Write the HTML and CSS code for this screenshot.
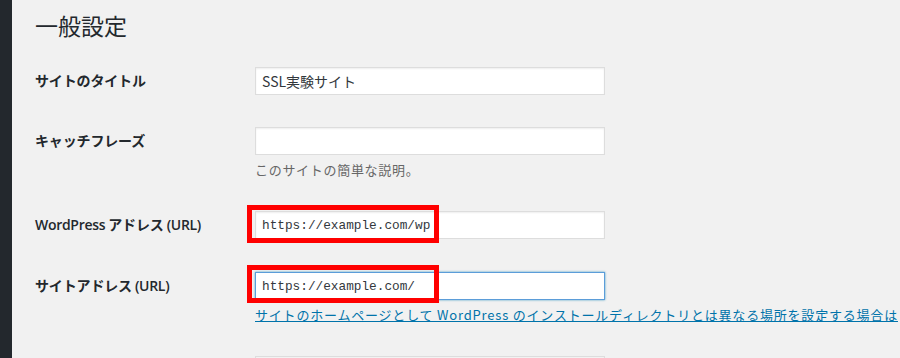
FILE: index.html
```html
<!DOCTYPE html>
<html lang="ja">
<head>
<meta charset="utf-8">
<title>一般設定</title>
<link rel="stylesheet" href="styles.css">
</head>
<body>
<div class="layout">
  <aside class="sidebar"></aside>
  <main class="wrap">
    <h1 class="page-title">一般設定</h1>
    <div class="form-table">
      <div class="row">
        <div class="th">サイトのタイトル</div>
        <div class="td"><input class="regular-text" type="text" value="SSL実験サイト"></div>
      </div>
      <div class="row">
        <div class="th">キャッチフレーズ</div>
        <div class="td">
          <input class="regular-text" type="text" value="">
          <p class="description">このサイトの簡単な説明。</p>
        </div>
      </div>
      <div class="row row-loose">
        <div class="th"><span class="latin">WordPress</span> アドレス <span class="latin">(URL)</span></div>
        <div class="td">
          <span class="field-wrap">
            <input class="regular-text code" type="text" value="https://example.com/wp">
            <span class="highlight hl-1"></span>
          </span>
        </div>
      </div>
      <div class="row">
        <div class="th">サイトアドレス <span class="latin">(URL)</span></div>
        <div class="td">
          <span class="field-wrap">
            <input class="regular-text code is-focused" type="text" value="https://example.com/">
            <span class="highlight hl-2"></span>
          </span>
          <p class="description link-line"><a class="help-link" href="#">サイトのホームページとして WordPress のインストールディレクトリとは異なる場所を設定する場合は</a></p>
        </div>
      </div>
      <div class="row">
        <div class="th"></div>
        <div class="td"><input class="regular-text" type="text" value=""></div>
      </div>
    </div>
  </main>
</div>
</body>
</html>
```

FILE: styles.css
```css
html, body {
  margin: 0;
  padding: 0;
  height: 100%;
  overflow: hidden;
}

body {
  background: #f1f1f1;
  color: #444;
  font-family: "Noto Sans CJK JP", "Noto Sans", sans-serif;
  font-size: 13px;
}

.layout {
  display: flex;
  min-height: 100%;
}

.sidebar {
  flex: 0 0 12px;
  background: #23282d;
}

.wrap {
  flex: 1;
  padding-left: 23px;
  overflow: hidden;
  white-space: nowrap;
}

.page-title {
  margin: 0 0 11px;
  padding-top: 10px;
  font-size: 23px;
  font-weight: 400;
  line-height: 30px;
  color: #23282d;
}

.row {
  display: grid;
  grid-template-columns: 220px 1fr;
}

.th {
  padding: 20px 0;
  font-size: 14px;
  font-weight: 600;
  line-height: 1.3;
  color: #23282d;
  letter-spacing: -0.15px;
}

.latin {
  font-family: "Open Sans", "Noto Sans CJK JP", sans-serif;
  font-weight: 600;
  letter-spacing: -0.3px;
}

.td {
  padding: 15px 0;
}

.row-loose .td {
  padding-bottom: 16px;
}

.regular-text {
  display: block;
  box-sizing: border-box;
  width: 350px;
  height: 28px;
  margin: 1px 0;
  padding: 3px 6px;
  border: 1px solid #ddd;
  background: #fff;
  color: #32373c;
  font-family: "Noto Sans CJK JP", "Noto Sans", sans-serif;
  font-size: 14px;
  box-shadow: inset 0 1px 2px rgba(0, 0, 0, 0.07);
  outline: none;
}

.code {
  font-family: "Liberation Mono", "DejaVu Sans Mono", monospace;
  font-size: 12.75px;
}

.is-focused {
  border-color: #5b9dd9;
  box-shadow: 0 0 2px rgba(30, 140, 190, 0.8);
}

.field-wrap {
  position: relative;
  display: block;
  width: 350px;
}

.highlight {
  position: absolute;
  left: -8px;
  width: 192px;
  height: 38px;
  box-sizing: border-box;
  border: 5px solid #ff0000;
  pointer-events: none;
}

.hl-1 {
  top: -6px;
}

.hl-2 {
  top: -7px;
}

.description {
  margin: 5px 0 0;
  font-size: 13px;
  line-height: 20px;
  color: #666;
  letter-spacing: 0.7px;
}

.link-line {
  margin-top: 4px;
  line-height: 21px;
  letter-spacing: 0.8px;
}

.help-link {
  color: #0073aa;
  text-decoration: underline;
}
```
